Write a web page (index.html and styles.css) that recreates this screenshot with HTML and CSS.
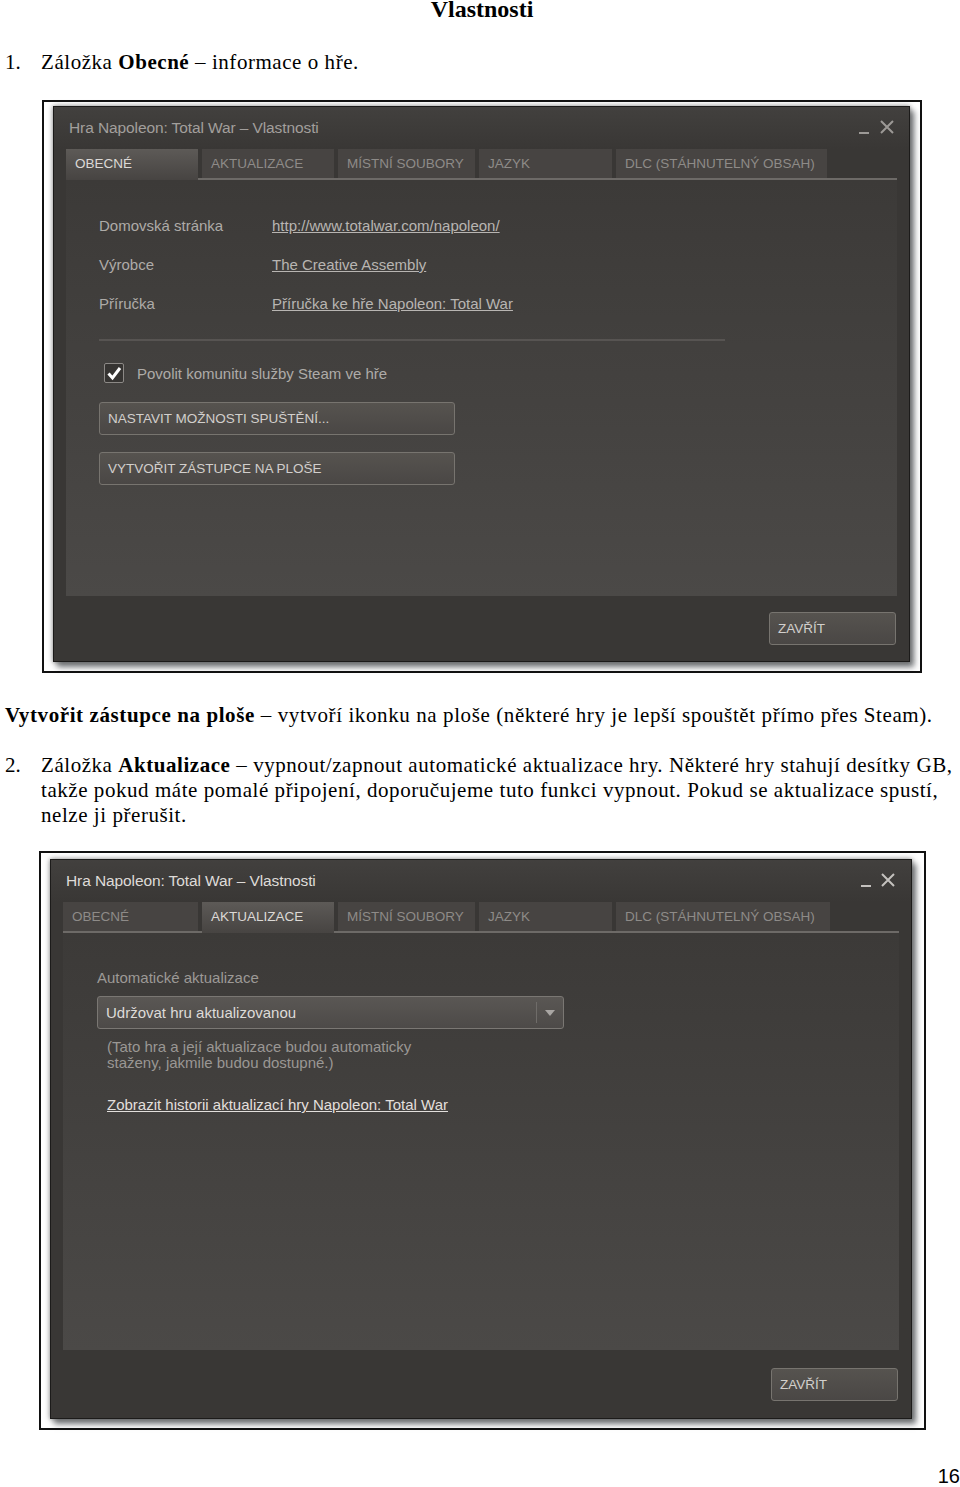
FILE: index.html
```html
<!DOCTYPE html>
<html lang="cs">
<head>
    <meta charset="UTF-8">
    <meta name="viewport" content="width=device-width, initial-scale=1.0">
    <title>Vlastnosti</title>
    <link rel="stylesheet" href="styles.css">
</head>
<body>

<h1 class="page-title">Vlastnosti</h1>

<div class="step step-first">
    <span class="num">1.</span>
    <span class="step-text">Záložka <b>Obecné</b> – informace o hře.</span>
</div>

<div class="shot shot-general">
    <div class="dialog">
        <div class="titlebar">
            <span class="title">Hra Napoleon: Total War – Vlastnosti</span>
            <span class="controls">
                <svg width="40" height="16" viewBox="0 0 40 16">
                    <rect x="0" y="13" width="10" height="2" fill="#9c9996"/>
                    <path d="M22 2 L34 14 M34 2 L22 14" stroke="#9c9996" stroke-width="2"/>
                </svg>
            </span>
        </div>
        <div class="tabs">
            <div class="tab active">OBECNÉ</div>
            <div class="tab">AKTUALIZACE</div>
            <div class="tab">MÍSTNÍ SOUBORY</div>
            <div class="tab">JAZYK</div>
            <div class="tab">DLC (STÁHNUTELNÝ OBSAH)</div>
        </div>
        <div class="panel panel-general">
            <div class="info-row">
                <span class="label">Domovská stránka</span>
                <a class="link">http://www.totalwar.com/napoleon/</a>
            </div>
            <div class="info-row">
                <span class="label">Výrobce</span>
                <a class="link">The Creative Assembly</a>
            </div>
            <div class="info-row">
                <span class="label">Příručka</span>
                <a class="link">Příručka ke hře Napoleon: Total War</a>
            </div>
            <div class="separator"></div>
            <div class="check-row">
                <span class="checkbox">
                    <svg width="16" height="16" viewBox="0 0 16 16">
                        <path d="M2.5 8.5 L6.5 13 L14 3" fill="none" stroke="#fff" stroke-width="3"/>
                    </svg>
                </span>
                <span class="check-label">Povolit komunitu služby Steam ve hře</span>
            </div>
            <div class="btn wide first">NASTAVIT MOŽNOSTI SPUŠTĚNÍ...</div>
            <div class="btn wide second">VYTVOŘIT ZÁSTUPCE NA PLOŠE</div>
        </div>
        <div class="footer">
            <div class="btn close">ZAVŘÍT</div>
        </div>
    </div>
</div>

<p class="note"><b>Vytvořit zástupce na ploše</b> – vytvoří ikonku na ploše (některé hry je lepší spouštět přímo přes Steam).</p>

<div class="step step-second">
    <span class="num">2.</span>
    <span class="step-text">Záložka <b>Aktualizace</b> – vypnout/zapnout automatické aktualizace hry. Některé hry stahují desítky GB, takže pokud máte pomalé připojení, doporučujeme tuto funkci vypnout. Pokud se aktualizace spustí, nelze ji přerušit.</span>
</div>

<div class="shot shot-updates">
    <div class="dialog">
        <div class="titlebar">
            <span class="title">Hra Napoleon: Total War – Vlastnosti</span>
            <span class="controls">
                <svg width="40" height="16" viewBox="0 0 40 16">
                    <rect x="0" y="13" width="10" height="2" fill="#c4c1be"/>
                    <path d="M21 2 L33 14 M33 2 L21 14" stroke="#c4c1be" stroke-width="2"/>
                </svg>
            </span>
        </div>
        <div class="tabs">
            <div class="tab">OBECNÉ</div>
            <div class="tab active">AKTUALIZACE</div>
            <div class="tab">MÍSTNÍ SOUBORY</div>
            <div class="tab">JAZYK</div>
            <div class="tab">DLC (STÁHNUTELNÝ OBSAH)</div>
        </div>
        <div class="panel panel-updates">
            <div class="field-label">Automatické aktualizace</div>
            <div class="select">
                <span class="select-value">Udržovat hru aktualizovanou</span>
                <span class="select-arrow">
                    <svg width="10" height="6" viewBox="0 0 10 6"><path d="M0 0 L10 0 L5 6 Z" fill="#a9a6a3"/></svg>
                </span>
            </div>
            <div class="hint">(Tato hra a její aktualizace budou automaticky<br>staženy, jakmile budou dostupné.)</div>
            <a class="link history">Zobrazit historii aktualizací hry Napoleon: Total War</a>
        </div>
        <div class="footer">
            <div class="btn close">ZAVŘÍT</div>
        </div>
    </div>
</div>

<div class="page-num">16</div>

</body>
</html>
```

FILE: styles.css
```css
body {
    margin: 0;
    width: 960px;
    font-family: "Liberation Serif", serif;
    color: #000;
    background: #fff;
}
.page-title {
    margin: -3px 0 0;
    padding-left: 4px;
    font-size: 24px;
    line-height: 24px;
    text-align: center;
}
.step {
    display: flex;
    font-size: 21px;
    line-height: 25px;
    letter-spacing: 0.55px;
}
.step .num {
    flex: 0 0 36px;
    padding-left: 5px;
    letter-spacing: 0;
}
.step-first {
    margin-top: 29px;
}
.step-second {
    margin-top: 25px;
    padding-right: 3px;
}

/* screenshot frames */
.shot {
    box-sizing: border-box;
    border: 2px solid #111;
    background: #fff;
}
.shot-general {
    width: 880px;
    height: 573px;
    margin: 25px 0 0 42px;
    padding: 4px 0 0 9px;
}
.shot-updates {
    width: 887px;
    height: 579px;
    margin: 23px 0 0 39px;
    padding: 6px 0 0 9px;
}
.dialog {
    box-sizing: border-box;
    display: flex;
    flex-direction: column;
    background: #393735;
    border: 1px solid #1c1b1a;
    box-shadow: 0 0 5px rgba(100, 100, 100, 0.8), 4px 5px 6px rgba(20, 25, 30, 0.6);
    font-family: "Liberation Sans", Arial, sans-serif;
    padding: 0 12px 0 12px;
}
.shot-general .dialog {
    width: 857px;
    height: 556px;
}
.shot-updates .dialog {
    width: 862px;
    height: 560px;
}
.titlebar {
    display: flex;
    justify-content: space-between;
    align-items: center;
    height: 42px;
    background: linear-gradient(#42403e, #393735);
    margin: 0 -12px;
    padding: 0 10px 0 15px;
}
.title {
    font-size: 15.5px;
    color: #a29f9c;
    letter-spacing: -0.1px;
}
.shot-updates .title {
    color: #dedbd8;
}
.controls svg {
    display: block;
    margin-top: -2px;
}
.tabs {
    display: flex;
    gap: 4px;
    border-bottom: 2px solid #6d6a67;
}
.tab {
    height: 29px;
    line-height: 29px;
    padding-left: 9px;
    font-size: 13.5px;
    color: #8e8b88;
    background: #474442;
    box-sizing: border-box;
}
.tab:nth-child(1) { width: 132px; }
.tab:nth-child(2) { width: 132px; }
.tab:nth-child(3) { width: 137px; }
.tab:nth-child(4) { width: 133px; }
.tab:nth-child(5) { width: 211px; }
.shot-updates .tab:nth-child(1) { width: 135px; }
.shot-updates .tab:nth-child(5) { width: 214px; }
.tab.active {
    color: #dcd9d6;
    background: linear-gradient(#5d5a57, #474442);
    height: 31px;
    margin-bottom: -2px;
}
.panel {
    flex: 1;
    background: linear-gradient(#3c3a38, #4b4947);
    padding-left: 33px;
}
.panel-general {
    padding-top: 26px;
}
.panel-updates {
    padding-top: 37px;
    padding-left: 34px;
}
.info-row {
    display: flex;
    height: 39px;
    line-height: 39px;
    font-size: 15px;
}
.label {
    width: 173px;
    color: #aeaba8;
}
.link {
    color: #b8b5b2;
    text-decoration: underline;
    font-size: 15px;
}
.separator {
    width: 626px;
    height: 2px;
    margin-top: 16px;
    background: #575452;
}
.check-row {
    display: flex;
    align-items: center;
    margin: 22px 0 0 5px;
    height: 20px;
}
.checkbox {
    box-sizing: border-box;
    width: 20px;
    height: 20px;
    border: 1px solid #8c8986;
    border-radius: 2px;
    background: #363432;
    display: flex;
    align-items: center;
    justify-content: center;
    margin-right: 13px;
}
.check-label {
    font-size: 15px;
    color: #aeaba8;
}
.btn {
    box-sizing: border-box;
    height: 33px;
    line-height: 31px;
    padding-left: 8px;
    border: 1px solid #77746f;
    border-radius: 3px;
    background: linear-gradient(#56534f, #4a4745);
    color: #d2cfcc;
    font-size: 13.5px;
}
.btn.wide {
    width: 356px;
}
.btn.first {
    margin-top: 19px;
}
.btn.second {
    margin-top: 17px;
}
.footer {
    display: flex;
    justify-content: flex-end;
    padding-top: 16px;
    height: 65px;
    box-sizing: border-box;
    margin-right: 1px;
}
.shot-updates .footer {
    height: 68px;
    padding-top: 18px;
}
.btn.close {
    width: 127px;
}
.field-label {
    font-size: 15px;
    line-height: 16px;
    color: #9c9996;
}
.select {
    box-sizing: border-box;
    display: flex;
    align-items: center;
    width: 467px;
    height: 33px;
    margin-top: 10px;
    padding-left: 8px;
    border: 1px solid #7a7773;
    border-radius: 3px;
    background: linear-gradient(#5a5754, #4d4a48);
}
.select-value {
    flex: 1;
    font-size: 15px;
    color: #dedbd8;
}
.select-arrow {
    display: flex;
    align-items: center;
    justify-content: center;
    width: 26px;
    height: 21px;
    border-left: 1px solid #6f6c69;
}
.hint {
    margin: 10px 0 0 10px;
    font-size: 15px;
    line-height: 16px;
    color: #9a9794;
}
.history {
    display: inline-block;
    margin: 26px 0 0 10px;
    line-height: 16px;
    color: #e2dfdc;
}
.note {
    margin: 30px 0 0;
    padding-left: 5px;
    font-size: 21px;
    line-height: 25px;
    letter-spacing: 0.6px;
}
.page-num {
    margin-top: 36px;
    text-align: right;
    font-family: "Liberation Sans", Arial, sans-serif;
    font-size: 20px;
    line-height: 20px;
}
```
